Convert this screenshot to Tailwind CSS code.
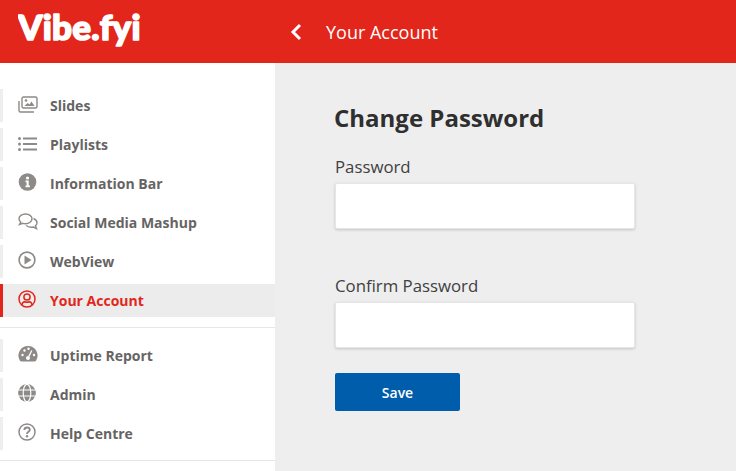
<!DOCTYPE html>
<html lang="en">
<head>
    <meta charset="UTF-8">
    <meta name="viewport" content="width=device-width, initial-scale=1.0">
    <title>Vibe.fyi</title>
    <script src="https://cdn.jsdelivr.net/npm/@tailwindcss/browser@4"></script>
</head>
<body class="h-[471px] overflow-hidden bg-[#eeeeee] font-['Open_Sans',sans-serif]">
<!-- Header -->
<header class="h-[63px] bg-[#e2261b] flex items-center text-white">
    <div class="w-[275px] pl-[18px]">
        <svg class="block w-[150px] h-[63px]" viewBox="0 0 150 63"><text x="0" y="40" fill="#fff" stroke="#fff" stroke-width="1.600" stroke-linejoin="round" font-family="Lato" font-weight="900" font-size="35" letter-spacing="0.200">Vibe.fyi</text></svg>
    </div>
    <svg class="ml-[14px] w-[14px] h-[18px]" viewBox="0 0 14 18" fill="none" stroke="#fff" stroke-width="3"><path d="M11 2 4 9l7 7"/></svg>
    <span class="ml-[23px] text-[18px] leading-none">Your Account</span>
</header>

<div class="flex h-[408px]">
    <!-- Sidebar -->
    <aside class="w-[275px] bg-white pt-[26px] text-[14px] font-bold text-[#666463]">
        <nav class="flex flex-col gap-[6px]">
            <a class="h-[33px] flex items-center border-l-[3px] border-[#eeeeee] pl-[15px]">
                <svg class="w-[20px] h-[17px] mb-[2px]" viewBox="0 0 20 17" fill="none" stroke="#8d8a88" stroke-width="1.400"><rect x="4" y="1" width="15" height="11" rx="1.500"/><path d="M1 5v9.500A1.500 1.500 0 0 0 2.500 16H16"/><path d="M6.500 10l3-3 2 1.500 2-3 3 4.500z" fill="#8d8a88" stroke="none"/><circle cx="8" cy="4.500" r="1.300" fill="#8d8a88" stroke="none"/></svg>
                <span class="ml-[12px]">Slides</span>
            </a>
            <a class="h-[33px] flex items-center border-l-[3px] border-[#eeeeee] pl-[15px]">
                <svg class="w-[19px] h-[16px] mb-[2px]" viewBox="0 0 19 16" fill="#8d8a88"><circle cx="1.500" cy="2.500" r="1.500"/><circle cx="1.500" cy="8" r="1.500"/><circle cx="1.500" cy="13.500" r="1.500"/><rect x="5" y="1.500" width="14" height="2"/><rect x="5" y="7" width="14" height="2"/><rect x="5" y="12.500" width="14" height="2"/></svg>
                <span class="ml-[13px]">Playlists</span>
            </a>
            <a class="h-[33px] flex items-center border-l-[3px] border-[#eeeeee] pl-[15px]">
                <svg class="w-[20px] h-[18px] mb-[3px]" viewBox="0 0 20 18"><circle cx="9.500" cy="9" r="8.800" fill="#8d8a88"/><circle cx="9.500" cy="5" r="1.600" fill="#fff"/><path d="M7.500 7.500h3.200v5h1.200v1.700H7.500v-1.700h1.100V9.200H7.500z" fill="#fff"/></svg>
                <span class="ml-[12px]">Information Bar</span>
            </a>
            <a class="h-[33px] flex items-center border-l-[3px] border-[#eeeeee] pl-[15px]">
                <svg class="w-[20px] h-[17px] mb-[3px]" viewBox="0 0 20 17" fill="none" stroke="#8d8a88" stroke-width="1.400"><path d="M7.500 1C3.900 1 1 3.100 1 5.800c0 1.300.7 2.400 1.700 3.300L1.500 11.500l3.200-1.200c.9.300 1.800.4 2.800.4 3.600 0 6.500-2.200 6.500-4.900S11.100 1 7.500 1z"/><path d="M15.500 5.500c2 .8 3.500 2.300 3.500 4.200 0 1.200-.6 2.300-1.600 3.100l1.100 2.700-3.200-1.500c-.7.200-1.500.3-2.300.3-2 0-3.800-.7-4.800-1.900"/></svg>
                <span class="ml-[12px]">Social Media Mashup</span>
            </a>
            <a class="h-[33px] flex items-center border-l-[3px] border-[#eeeeee] pl-[15px]">
                <svg class="w-[18px] h-[18px] mb-[3px] mr-[2px]" viewBox="0 0 18 18" fill="none"><circle cx="9" cy="9" r="7.900" stroke="#8d8a88" stroke-width="1.600"/><path d="M6.500 4.500l7 4.500-7 4.500z" fill="#8d8a88"/></svg>
                <span class="ml-[12px]">WebView</span>
            </a>
            <a class="h-[33px] flex items-center border-l-[3px] border-[#e2261b] bg-[#ececec] pl-[15px] text-[#e2261b]">
                <svg class="w-[18px] h-[18px] mb-[3px] mr-[2px]" viewBox="0 0 18 18" fill="none" stroke="#e2261b" stroke-width="1.500"><circle cx="9" cy="9" r="8"/><circle cx="9" cy="7" r="3.100"/><path d="M3.800 15c.4-2.300 1.800-3.300 3-3.300 1.400.6 3 .6 4.400 0 1.200 0 2.600 1 3 3.300"/></svg>
                <span class="ml-[12px]">Your Account</span>
            </a>
        </nav>
        <div class="h-[1px] bg-[#e6e6e6] mt-[10px] mb-[11px]"></div>
        <nav class="flex flex-col gap-[6px]">
            <a class="h-[33px] flex items-center border-l-[3px] border-[#eeeeee] pl-[15px]">
                <svg class="w-[20px] h-[18px] mb-[3px]" viewBox="0 0 20 18"><path d="M10 1a9.500 9.500 0 0 0-8 14.700c.3.500.8.800 1.400.800h13.200c.6 0 1.100-.3 1.400-.8A9.500 9.500 0 0 0 10 1z" fill="#8d8a88"/><circle cx="4.500" cy="10" r="1.200" fill="#fff"/><circle cx="6.500" cy="5.500" r="1.200" fill="#fff"/><circle cx="10.500" cy="3.800" r="1.200" fill="#fff"/><circle cx="16" cy="10" r="1.200" fill="#fff"/><path d="M13.800 5.500 10.800 11.500" stroke="#fff" stroke-width="1.300"/><circle cx="10" cy="13" r="2" fill="#fff"/></svg>
                <span class="ml-[12px]">Uptime Report</span>
            </a>
            <a class="h-[33px] flex items-center border-l-[3px] border-[#eeeeee] pl-[15px]">
                <svg class="w-[18px] h-[18px] mb-[3px] mr-[2px]" viewBox="0 0 18 18"><circle cx="9" cy="9" r="8.900" fill="#8d8a88"/><g fill="none" stroke="#fff" stroke-width="1.200"><ellipse cx="9" cy="9" rx="3.800" ry="8.700"/><path d="M0 6h18M0 12h18"/></g></svg>
                <span class="ml-[12px]">Admin</span>
            </a>
            <a class="h-[33px] flex items-center border-l-[3px] border-[#eeeeee] pl-[15px]">
                <svg class="w-[18px] h-[18px] mb-[3px] mr-[2px]" viewBox="0 0 18 18" fill="none" stroke="#8d8a88"><circle cx="9" cy="9" r="8" stroke-width="1.500"/><path d="M6.300 7c.1-1.700 1.300-2.500 2.800-2.500s2.700.9 2.700 2.300c0 2.100-2.800 2-2.800 4.200" stroke-width="1.800"/><circle cx="9" cy="13.300" r="1.200" fill="#8d8a88" stroke="none"/></svg>
                <span class="ml-[12px]">Help Centre</span>
            </a>
        </nav>
        <div class="h-[1px] bg-[#e6e6e6] mt-[10px]"></div>
    </aside>

    <!-- Main -->
    <main class="flex-1 pl-[60px] pt-[39px]">
        <form class="w-[300px]">
            <h1 class="-ml-[1px] text-[24px] leading-[32px] font-bold text-[#2f2f2f]">Change Password</h1>
            <label class="block mt-[22px] text-[16.800px] leading-[22px] text-[#404040]">Password</label>
            <input type="password" class="block mt-[5px] w-[300px] h-[46px] bg-white border border-[#e6e6e6] rounded-[2px] shadow-[0_1px_3px_rgba(0,0,0,0.18)]">
            <label class="block mt-[46px] text-[16.800px] leading-[22px] text-[#404040]">Confirm Password</label>
            <input type="password" class="block mt-[5px] w-[300px] h-[46px] bg-white border border-[#e6e6e6] rounded-[2px] shadow-[0_1px_3px_rgba(0,0,0,0.18)]">
            <button type="button" class="block mt-[25px] w-[125px] h-[38px] bg-[#005dab] rounded-[2px] text-white text-[14px] font-semibold">Save</button>
        </form>
    </main>
</div>
</body>
</html>
